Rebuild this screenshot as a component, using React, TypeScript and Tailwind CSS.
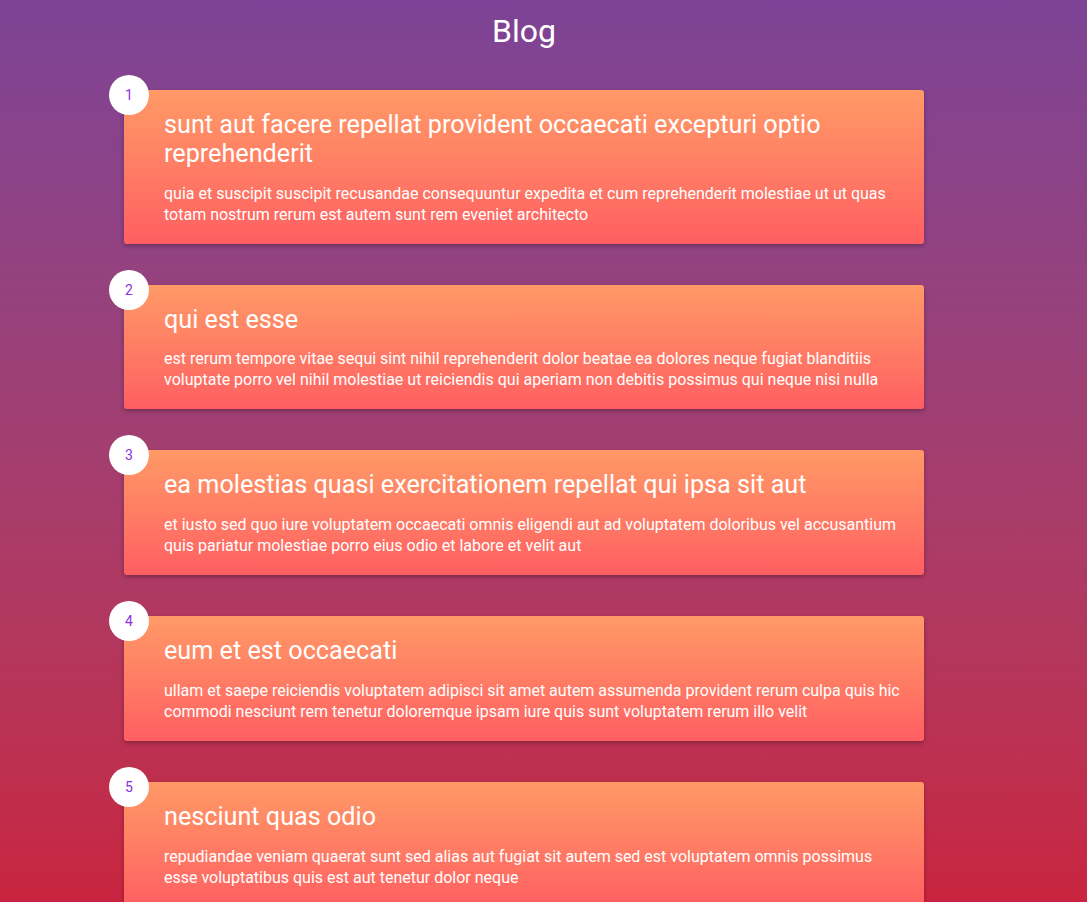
const posts = [
  {
    id: 1,
    title: "sunt aut facere repellat provident occaecati excepturi optio reprehenderit",
    body: "quia et suscipit suscipit recusandae consequuntur expedita et cum reprehenderit molestiae ut ut quas totam nostrum rerum est autem sunt rem eveniet architecto",
  },
  {
    id: 2,
    title: "qui est esse",
    body: "est rerum tempore vitae sequi sint nihil reprehenderit dolor beatae ea dolores neque fugiat blanditiis voluptate porro vel nihil molestiae ut reiciendis qui aperiam non debitis possimus qui neque nisi nulla",
  },
  {
    id: 3,
    title: "ea molestias quasi exercitationem repellat qui ipsa sit aut",
    body: "et iusto sed quo iure voluptatem occaecati omnis eligendi aut ad voluptatem doloribus vel accusantium quis pariatur molestiae porro eius odio et labore et velit aut",
  },
  {
    id: 4,
    title: "eum et est occaecati",
    body: "ullam et saepe reiciendis voluptatem adipisci sit amet autem assumenda provident rerum culpa quis hic commodi nesciunt rem tenetur doloremque ipsam iure quis sunt voluptatem rerum illo velit",
  },
  {
    id: 5,
    title: "nesciunt quas odio",
    body: "repudiandae veniam quaerat sunt sed alias aut fugiat sit autem sed est voluptatem omnis possimus esse voluptatibus quis est aut tenetur dolor neque",
  },
  {
    id: 6,
    title: "dolorem eum magni eos aperiam quia",
    body: "ut aspernatur corporis harum nihil quis provident sequi mollitia nobis aliquid molestiae perspiciatis et ea nemo ab reprehenderit accusantium quas voluptate dolores velit et doloremque molestiae",
  },
];

function PostCard({ id, title, body }: { id: number; title: string; body: string }) {
  return (
    <div className="relative rounded-[3px] bg-gradient-to-b from-[#ff9966] to-[#ff5e62] pl-10 pr-5 pt-[21px] pb-[19px] shadow-[0_2px_4px_rgba(0,0,0,0.3)]">
      {/* Number badge */}
      <div className="absolute -left-[15px] -top-[15px] flex h-10 w-10 items-center justify-center rounded-full bg-white text-sm text-[#8e2de2]">
        {id}
      </div>
      <h2 className="text-[25.2px] leading-[28.8px] text-white">{title}</h2>
      <p className="mt-[14px] text-base leading-[21px] text-white">{body}</p>
    </div>
  );
}

export default function App() {
  return (
    <div
      className="h-screen overflow-hidden bg-gradient-to-b from-[#7d4396] to-[#c9243f]"
      style={{ fontFamily: "Roboto, 'Noto Sans', sans-serif" }}
    >
      <div className="ml-[124px] w-[800px] pt-3">
        <h1 className="text-center text-[32px] leading-[38px] text-white">Blog</h1>
        <div className="mt-10 flex flex-col gap-[41px]">
          {posts.map((p) => (
            <PostCard key={p.id} {...p} />
          ))}
        </div>
      </div>
    </div>
  );
}
